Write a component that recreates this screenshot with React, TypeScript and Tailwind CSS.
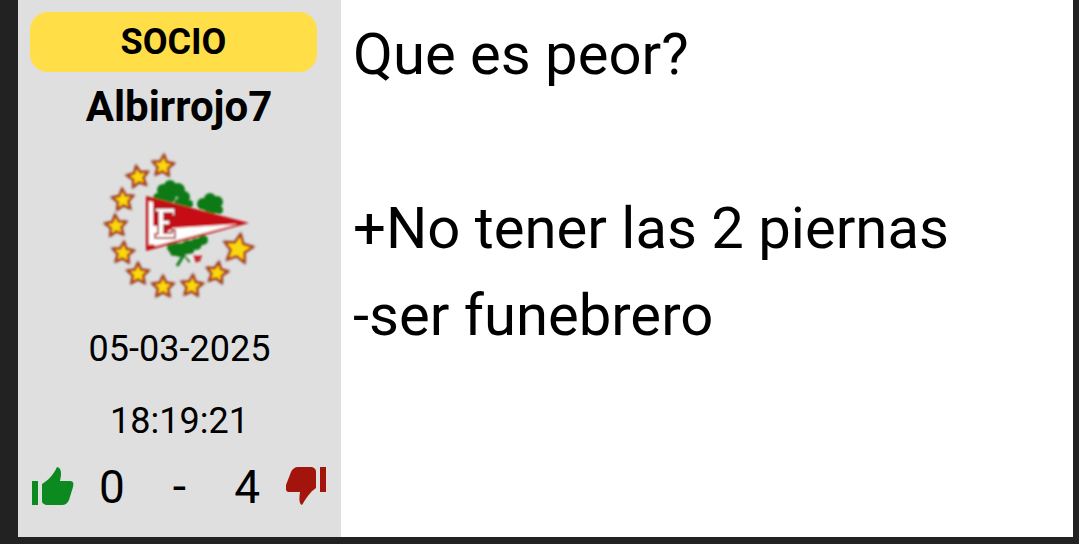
const starPoints = (cx: number, cy: number, r: number, rot = 0) => {
  const pts: string[] = [];
  for (let i = 0; i < 10; i++) {
    const rad = i % 2 === 0 ? r : r * 0.48;
    const a = ((-90 + rot + i * 36) * Math.PI) / 180;
    pts.push(`${(cx + rad * Math.cos(a)).toFixed(1)},${(cy + rad * Math.sin(a)).toFixed(1)}`);
  }
  return pts.join(" ");
};

const stars = [
  [73, 26, 11, 5],
  [48, 37, 11, -10],
  [33, 60, 11, -5],
  [26, 86, 11, -5],
  [33, 113, 11, 5],
  [48, 134, 11, 0],
  [73, 147, 11, 0],
  [102, 146, 11, 5],
  [127, 133, 11, 10],
  [148, 109, 15, 10],
];

const leaves = [
  [73, 50, 6], [80, 46, 6], [88, 50, 7], [94, 57, 6], [78, 56, 8], [68, 58, 5], [90, 64, 6], [99, 64, 4],
  [113, 64, 6], [120, 59, 6], [127, 62, 6], [121, 68, 7], [129, 70, 4],
  [83, 107, 6], [90, 110, 7], [98, 107, 7], [106, 104, 6], [113, 100, 5], [84, 112, 4], [99, 111, 5],
];

function ClubBadge() {
  return (
    <svg viewBox="0 0 180 170" className="mx-auto block h-[170px] w-[180px]">
      <defs>
        <filter id="soft" x="-20%" y="-20%" width="140%" height="140%">
          <feGaussianBlur stdDeviation="0.8" />
        </filter>
      </defs>
      <g filter="url(#soft)">
        {/* clover behind the pennant */}
        <g fill="#107a18">
          {leaves.map(([x, y, r], i) => (
            <circle key={i} cx={x} cy={y} r={r} />
          ))}
        </g>
        <path d="M95 113 L87 126" stroke="#107a18" strokeWidth="3" fill="none" />
        <path d="M94 114 L100 122" stroke="#107a18" strokeWidth="2.5" fill="none" />
        <path d="M95 115 L110 113 L113 120 L104 124 Z" fill="#f0f0f0" />
        <path d="M103 115 L112 115 L111 121 L105 123 Z" fill="#c9252b" />
        {stars.map(([x, y, r, rot], i) => (
          <g key={i}>
            <polygon
              points={starPoints(x, y, r + 1, rot)}
              fill="#8a8078"
              stroke="#9a8a80"
              strokeWidth="3.5"
              strokeLinejoin="round"
              opacity="0.55"
            />
            <polygon
              points={starPoints(x, y, r, rot)}
              fill="#fbd80c"
              stroke="#b0401a"
              strokeWidth="2.4"
              strokeLinejoin="round"
            />
          </g>
        ))}
        {/* pennant */}
        <path d="M56 56 L159 83 L56 111 Z" fill="#c60f18" />
        <path d="M83 88 L148 84 L65 106 L65 100 Z" fill="#fff" />
        <path d="M59 61 L63 62 L63 104 L59 105 Z" fill="#fff" />
        <path d="M63 86 L70 86 L70 104 L63 105 Z" fill="#fff" />
        <path
          d="M65 68 H85 V76 H82 V73 H74 V80 H80 V85 H74 V93 H82 V90 H85 V98 H65 V94 H68 V72 H65 Z"
          fill="#fff"
          stroke="#9c0f15"
          strokeWidth="1.6"
        />
      </g>
    </svg>
  );
}

function ThumbUp() {
  return (
    <svg viewBox="0 0 42 40" className="h-10 w-[42px]">
      <path d="M0 14 H6 V38 H0 Z" fill="#0c8a20" />
      <path
        d="M10 17 C15 14 21 9 25 0 C29 1 30 5 28 14 L38 14 C41 14 42 16 41 20 L37 33 C36 36 33 38 30 38 L16 38 C12 38 10 36 10 34 Z"
        fill="#0c8a20"
      />
    </svg>
  );
}

function ThumbDown() {
  return (
    <svg viewBox="0 0 42 40" className="h-10 w-[42px]">
      <path d="M34 0 H40 V25 H34 Z" fill="#a3140d" />
      <path
        d="M30 21 C24 25 20 31 16 38 C13 37 13 32 14 25 L3 25 C0 25 -1 21 0 18 L5 5 C6 2 9 0 12 0 L24 0 C28 0 30 2 30 5 Z"
        fill="#a3140d"
      />
    </svg>
  );
}

export default function App() {
  return (
    <div className="h-[544px] w-[1079px] overflow-hidden bg-[#222222] pb-[7px] pl-[18px] pr-[6px] font-['Roboto',sans-serif] text-black">
      <div className="flex h-full">
        <aside className="flex w-[323px] flex-col bg-[#dfdfdf] pt-3">
          <div className="ml-3 mr-6 flex h-[60px] items-center justify-center rounded-[18px] bg-[#ffde47] text-[36px] font-bold leading-none">
            SOCIO
          </div>
          <div className="mr-px mt-[11px] text-center text-[42px] font-bold leading-[48px]">Albirrojo7</div>
          <div className="mt-[9px]">
            <ClubBadge />
          </div>
          <div className="mt-[17px] text-center text-[36px] leading-[44px]">05-03-2025</div>
          <div className="mt-[28px] text-center text-[36px] leading-[44px]">18:19:21</div>
          <div className="mt-[22px] flex items-center pl-[14px] pr-[13px]">
            <ThumbUp />
            <span className="ml-[25px] text-[46px] leading-[44px]">0</span>
            <span className="ml-[48px] text-[48px] leading-[44px]">-</span>
            <span className="ml-[48px] text-[46px] leading-[44px]">4</span>
            <div className="ml-auto">
              <ThumbDown />
            </div>
          </div>
        </aside>
        <main className="flex-1 bg-white pl-[12px] text-[58px] leading-[87px]">
          <p className="mt-[11px]">Que es peor?</p>
          <br />
          <p>+No tener las 2 piernas</p>
          <p>-ser funebrero</p>
        </main>
      </div>
    </div>
  );
}
